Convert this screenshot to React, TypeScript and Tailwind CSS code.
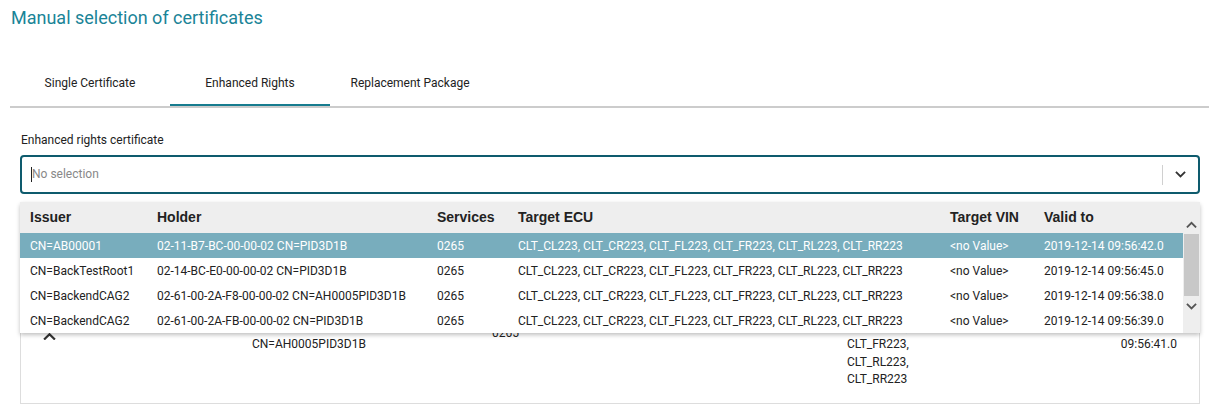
const rows = [
  { issuer: "CN=AB00001", holder: "02-11-B7-BC-00-00-02 CN=PID3D1B", valid: "2019-12-14 09:56:42.0" },
  { issuer: "CN=BackTestRoot1", holder: "02-14-BC-E0-00-00-02 CN=PID3D1B", valid: "2019-12-14 09:56:45.0" },
  { issuer: "CN=BackendCAG2", holder: "02-61-00-2A-F8-00-00-02 CN=AH0005PID3D1B", valid: "2019-12-14 09:56:38.0" },
  { issuer: "CN=BackendCAG2", holder: "02-61-00-2A-FB-00-00-02 CN=PID3D1B", valid: "2019-12-14 09:56:39.0" },
];

const ecus = "CLT_CL223, CLT_CR223, CLT_FL223, CLT_FR223, CLT_RL223, CLT_RR223";

function Chevron({ up, className }: { up?: boolean; className?: string }) {
  return (
    <svg viewBox="0 0 12 8" className={className} fill="none" stroke="currentColor" strokeWidth="2">
      <path d={up ? "M1 7 L6 2 L11 7" : "M1 1 L6 6 L11 1"} />
    </svg>
  );
}

function Tab({ label, active }: { label: string; active?: boolean }) {
  return (
    <div
      className={`flex h-[45px] w-[160px] items-center justify-center border-b-2 text-[12px] text-[#222] ${
        active ? "border-[#177c8f]" : "border-transparent"
      }`}
    >
      {label}
    </div>
  );
}

function Dropdown() {
  return (
    <div className="absolute left-0 right-0 top-0 z-10 flex rounded-t-[3px] bg-white shadow-[0_2px_4px_rgba(0,0,0,0.25)]">
      <div className="flex-1">
        <div className="flex h-[31px] items-center bg-[#eeeeee] font-['Liberation_Sans',sans-serif] text-[14px] font-bold text-[#222]">
          <div className="w-[137px] pl-[10px]">Issuer</div>
          <div className="w-[280px]">Holder</div>
          <div className="w-[81px]">Services</div>
          <div className="w-[432px]">Target ECU</div>
          <div className="w-[94px]">Target VIN</div>
          <div>Valid to</div>
        </div>
        {rows.map((r, i) => (
          <div
            key={i}
            className={`flex h-[25px] items-center text-[12px] ${i === 0 ? "bg-[#78adbd] text-white" : "text-[#222]"}`}
          >
            <div className="w-[137px] pl-[10px]">{r.issuer}</div>
            <div className="w-[280px]">{r.holder}</div>
            <div className="w-[81px]">0265</div>
            <div className="w-[432px]">{ecus}</div>
            <div className="w-[94px]">&lt;no Value&gt;</div>
            <div>{r.valid}</div>
          </div>
        ))}
      </div>
      <div className="flex w-[17px] flex-col bg-[#eeeeee] pt-[13px] text-[#555]">
        <div className="flex h-[19px] items-center justify-center">
          <Chevron up className="w-[11px]" />
        </div>
        <div className="mx-[1px] h-[62px] bg-[#c8c8c8]" />
        <div className="flex h-[22px] items-center justify-center">
          <Chevron className="w-[11px]" />
        </div>
      </div>
    </div>
  );
}

function BehindTable() {
  return (
    <div className="border-x border-b border-[#dddddd] text-[12px] text-[#222]">
      <div className="h-[32px]" />
      <div className="h-[35px]" />
      <div className="flex h-[134px] items-center">
        <div className="flex w-[74px] pl-[22px]">
          <Chevron up className="w-[13px] text-[#333]" />
        </div>
        <div className="w-[157px] pb-[14px]">CN=AB00001</div>
        <div className="w-[240px] leading-[17.5px]">
          02-61-00-2A-F8-00-00-02
          <br />
          CN=AH0005PID3D1B
        </div>
        <div className="w-[355px] pb-[6px]">0265</div>
        <div className="w-[80px] leading-[17.5px]">
          CLT_CL223,
          <br />
          CLT_CR223,
          <br />
          CLT_FL223,
          <br />
          CLT_FR223,
          <br />
          CLT_RL223,
          <br />
          CLT_RR223
        </div>
        <div className="flex-1" />
        <div className="w-[100px] pr-[22px] text-right leading-[17.5px]">
          2019-12-14
          <br />
          09:56:41.0
        </div>
      </div>
    </div>
  );
}

export default function App() {
  return (
    <div className="h-[406px] w-[1209px] overflow-hidden bg-white pl-[10px] font-['Roboto',sans-serif]">
      <h1 className="pl-[1px] pt-[6px] text-[18px] leading-[24px] text-[#1a8497]">Manual selection of certificates</h1>
      <div className="mt-[31px] flex border-b-2 border-[#cccccc]">
        <Tab label="Single Certificate" />
        <Tab label="Enhanced Rights" active />
        <Tab label="Replacement Package" />
      </div>
      <div className="pl-[10px] pr-[9px]">
        <div className="mt-[24px] pl-[1px] text-[12px] leading-[16px] text-[#222]">Enhanced rights certificate</div>
        <div className="mt-[7px] flex h-[39px] items-center rounded-[4px] border-2 border-[#0e5b6d] pl-[9px] pr-[12px]">
          <div className="h-[15px] w-px bg-[#222]" />
          <div className="flex-1 pb-[1px] text-[12px] text-[#888]">No selection</div>
          <div className="h-[20px] w-px bg-[#d0d0d0]" />
          <Chevron className="ml-[12px] w-[11px] text-[#333]" />
        </div>
        <div className="relative mt-[8px]">
          <Dropdown />
          <BehindTable />
        </div>
      </div>
    </div>
  );
}
